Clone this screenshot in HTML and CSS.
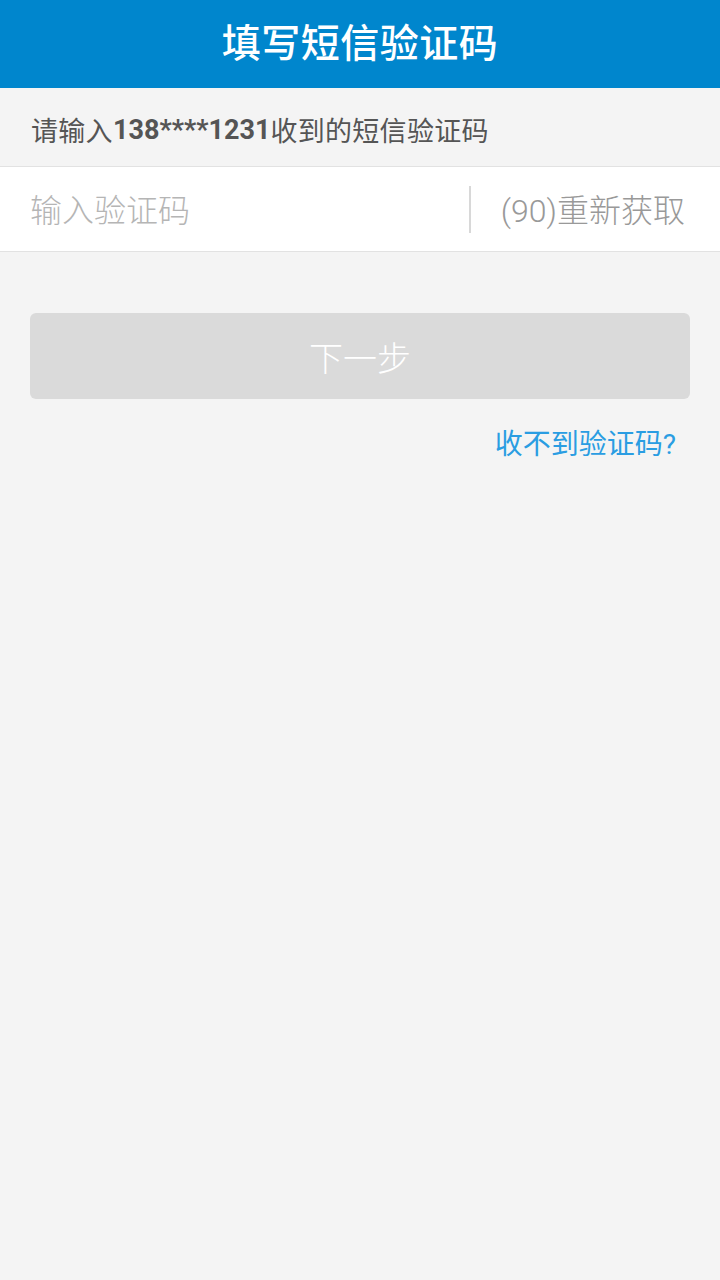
FILE: index.html
```html
<!DOCTYPE html>
<html lang="zh-CN">
<head>
<meta charset="utf-8">
<title>填写短信验证码</title>
<link rel="stylesheet" href="styles.css">
</head>
<body>
<header class="topbar"><h1 class="title">填写短信验证码</h1></header>
<div class="hint">请输入<b class="phone">138****1231</b>收到的短信验证码</div>
<div class="code-row">
  <div class="code-input">输入验证码</div>
  <div class="divider"></div>
  <div class="resend">(90)重新获取</div>
</div>
<div class="actions">
  <button class="next">下一步</button>
  <div class="help-row"><a class="help">收不到验证码?</a></div>
</div>
</body>
</html>
```
FILE: styles.css
```css
html, body {
  margin: 0;
  padding: 0;
}
body {
  width: 720px;
  min-height: 1280px;
  background: #f4f4f4;
  font-family: Roboto, "Noto Sans CJK SC", sans-serif;
}
.topbar {
  height: 88px;
  background: #0086cd;
  display: flex;
  align-items: center;
  justify-content: center;
}
.title {
  margin: 0;
  color: #fff;
  font-size: 39px;
  font-weight: 500;
  letter-spacing: 0.5px;
  line-height: 1;
}
.hint {
  height: 79px;
  box-sizing: border-box;
  padding: 5px 0 0 31px;
  display: flex;
  align-items: center;
  font-size: 27px;
  letter-spacing: 0.3px;
  color: #555;
  border-bottom: 1px solid #e2e2e2;
}
.phone {
  font-weight: 700;
  letter-spacing: 0;
}
.code-row {
  height: 85px;
  box-sizing: border-box;
  background: #fff;
  border-bottom: 1px solid #e2e2e2;
  display: flex;
  align-items: center;
  padding: 0 35px 3px 30px;
}
.code-input {
  flex: 1;
  font-size: 32px;
  color: #b5b5b5;
  font-weight: 300;
}
.divider {
  width: 2px;
  height: 47px;
  margin-top: 3px;
  background: #d8d8d8;
}
.resend {
  margin-left: 30px;
  font-size: 32px;
  color: #999;
  font-weight: 300;
}
.actions {
  padding: 61px 30px 0;
}
.next {
  display: block;
  width: 100%;
  height: 86px;
  border: none;
  border-radius: 6px;
  background: #dadada;
  color: #fff;
  font-family: Roboto, "Noto Sans CJK SC", sans-serif;
  font-size: 34px;
  font-weight: 300;
  padding: 0;
}
.help-row {
  display: flex;
  justify-content: flex-end;
  padding: 27px 14px 0 0;
}
.help {
  font-size: 28px;
  color: #2a9de2;
  line-height: 38px;
}
```
